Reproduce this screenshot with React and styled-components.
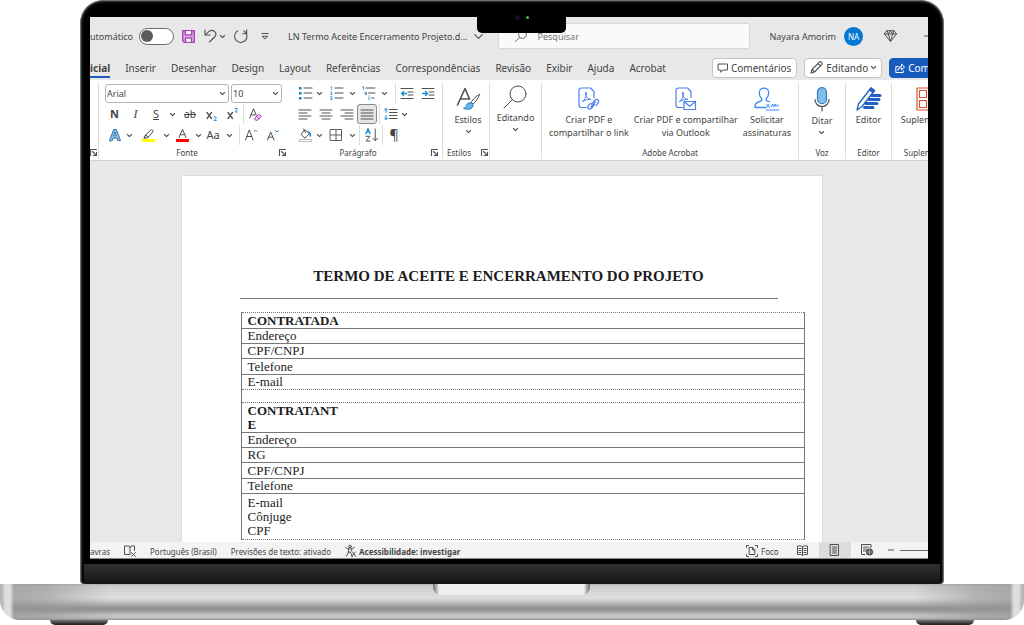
// App.jsx
import React from 'react';
import styled, { createGlobalStyle, css } from 'styled-components';

const GlobalStyle = createGlobalStyle`
  * {
    box-sizing: border-box;
  }

  body {
    margin: 0;
    background: #fff;
    color: #444;
    font-family: "Noto Sans", "Open Sans", sans-serif;
    font-size: 9px;
  }

  button, input, select {
    margin: 0;
    padding: 0;
    border: 0;
    background: none;
    color: inherit;
    font: inherit;
  }

  svg {
    display: block;
    flex: none;
    overflow: visible;
  }
`;

/* laptop */

const Laptop = styled.div`
  display: flex;
  flex-direction: column;
  height: 100vh;
  min-height: 400px;
  overflow: hidden;
`;

const Lid = styled.div`
  position: relative;
  flex: 1;
  min-height: 0;
  display: flex;
  flex-direction: column;
  margin: 0 80px;
  padding: 16px 15px 0 9px;
  border: 1px solid #6f7072;
  border-bottom: 0;
  border-radius: 23px 23px 4px 4px;
  background: #000;
  box-shadow: inset 0 0 2px 1px #3c3c3c;
`;

const Notch = styled.div`
  position: absolute;
  top: 8px;
  left: calc(50% - 35px);
  width: 89px;
  height: 24px;
  display: flex;
  justify-content: center;
  align-items: center;
  gap: 6px;
  padding-bottom: 8px;
  border-radius: 0 0 5px 5px;
  background: #000;
`;

const Dot = styled.span`
  width: ${({ $size }) => $size}px;
  height: ${({ $size }) => $size}px;
  border-radius: 50%;
  background: ${({ $color }) => $color};
`;

const Screen = styled.div`
  flex: 1;
  min-height: 0;
  display: flex;
  flex-direction: column;
  overflow: hidden;
  background: #e8e8e8;
`;

const Chin = styled.div`
  flex: none;
  height: 20px;
  margin: 5px -12px 0 -6px;
  border-radius: 0 0 4px 4px;
  background: linear-gradient(#303030, #161616);
`;

const Base = styled.div`
  flex: none;
  display: flex;
  justify-content: center;
  height: 36px;
  padding-right: 2px;
  border-radius: 0 0 20px 20px;
  background:
    linear-gradient(90deg, #b5b5b5 2px, #dedede 5px, #dedede 10px, rgba(150, 150, 150, 0.7) 14px,
      rgba(150, 150, 150, 0.6) 45px, transparent 110px, transparent calc(100% - 110px),
      rgba(150, 150, 150, 0.6) calc(100% - 45px), rgba(150, 150, 150, 0.7) calc(100% - 14px),
      #dedede calc(100% - 10px), #dedede calc(100% - 5px), #b5b5b5 calc(100% - 2px)),
    linear-gradient(#b0b0b0, #cdcdcd 2px, #dedede 14px, #c4c4c4 18px, #909090 24px, #999 27px, #c4c4c4 31px, #c0c0c0 34px, #8c8c8c);
`;

const Groove = styled.div`
  width: 157px;
  height: 11px;
  border-radius: 0 0 8px 8px;
  background: linear-gradient(90deg, #6c6c6c, #bbb 4px, #efefef 6px, #efefef calc(100% - 6px), #bbb calc(100% - 4px), #6c6c6c);
`;

const Feet = styled.div`
  flex: none;
  display: flex;
  justify-content: space-between;
  height: 5px;
  padding: 0 50px;
`;

const Foot = styled.div`
  width: 58px;
  border-radius: 0 0 6px 6px;
  background: linear-gradient(#777, #2b2b2b 4px);
`;

/* title bar */

const TitleBar = styled.header`
  flex: none;
  display: flex;
  align-items: center;
  height: 38px;
`;

const AutoSave = styled.label`
  display: flex;
  align-items: center;
  gap: 6px;
`;

const Toggle = styled.input`
  appearance: none;
  display: flex;
  align-items: center;
  width: 35px;
  height: 17px;
  padding-left: 1px;
  border: 1px solid #6a6a6a;
  border-radius: 9px;
  background: #fff;

  &::before {
    content: "";
    width: 12px;
    height: 12px;
    border-radius: 50%;
    background: #5c5c5c;
  }
`;

const QuickTools = styled.div`
  display: flex;
  align-items: center;
  gap: 9px;
  margin-left: 8px;
`;

const PlainButton = styled.button`
  display: flex;
  align-items: center;
  justify-content: center;
  gap: 3px;
`;

const FileName = styled(PlainButton)`
  gap: 6px;
  margin-left: 15px;
  white-space: nowrap;
`;

const Search = styled.label`
  flex: 1;
  display: flex;
  align-items: center;
  gap: 11px;
  height: 26px;
  margin: 0 19px 0 15px;
  padding-left: 16px;
  border: 1px solid #d6d6d6;
  border-radius: 3px;
  background: #fafafa;
`;

const SearchInput = styled.input`
  flex: 1;
  min-width: 0;
  outline: 0;

  &::placeholder {
    color: #757575;
    opacity: 1;
  }
`;

const Account = styled.div`
  display: flex;
  align-items: center;
  gap: 8px;
  white-space: nowrap;
`;

const Avatar = styled.span`
  width: 19px;
  height: 19px;
  border-radius: 50%;
  background: #0078d4;
  color: #fff;
  font-size: 8px;
  line-height: 19px;
  text-align: center;
`;

const WindowTools = styled.div`
  display: flex;
  align-items: center;
  gap: 27px;
  width: 65px;
  padding-left: 21px;
  overflow: hidden;
`;

/* tabs */

const TabBar = styled.nav`
  flex: none;
  display: flex;
  align-items: center;
  height: 25px;
  font-size: 10px;
  overflow: hidden;
`;

const Tab = styled.button`
  height: 20px;
  margin-right: 15px;
  padding-top: 2px;
  border-bottom: 2px solid ${({ $active }) => ($active ? '#185abd' : 'transparent')};
  font-weight: ${({ $active }) => ($active ? 700 : 400)};
  white-space: nowrap;
`;

const TabActions = styled.div`
  display: flex;
  gap: 7px;
  width: 216px;
  margin-left: auto;
`;

const ActionButton = styled(PlainButton)`
  flex: none;
  height: 20px;
  padding: 0 5px;
  border: 1px solid #c4c4c4;
  border-radius: 4px;
  background: #fff;
  white-space: nowrap;

  ${({ $primary }) => $primary && css`
    border-color: #185abd;
    background: #185abd;
    color: #fff;
  `}
`;

/* ribbon */

const Ribbon = styled.section`
  flex: none;
  display: flex;
  height: 81px;
  border-bottom: 1px solid #d2d2d2;
  background: #fff;
  overflow: hidden;
`;

const Group = styled.div`
  flex: none;
  display: flex;
  flex-direction: column;
  width: ${({ $width }) => $width}px;
  margin: 3px 0 1px;
  padding-left: ${({ $pad }) => $pad || 0}px;
  border-right: 1px solid ${({ $open }) => ($open ? 'transparent' : '#dcdcdc')};
`;

const GroupBody = styled.div`
  flex: 1;
  display: flex;
  flex-direction: ${({ $rows }) => ($rows ? 'column' : 'row')};
  justify-content: ${({ $rows }) => ($rows ? 'flex-start' : 'center')};
  gap: ${({ $rows }) => ($rows ? 1 : 5)}px;
`;

const GroupFooter = styled.div`
  display: flex;
  align-items: center;
  height: 13px;
  font-size: 8px;

  svg {
    margin-right: 4px;
  }
`;

const GroupLabel = styled.span`
  flex: 1;
  display: flex;
  justify-content: center;
  padding-right: ${({ $inset }) => ($inset ? 10 : 0)}px;
  white-space: nowrap;
`;

const ToolRow = styled.div`
  display: flex;
  align-items: center;
  height: 20px;
`;

const Tool = styled.button`
  display: flex;
  align-items: center;
  justify-content: center;
  flex: none;
  width: ${({ $width }) => $width}px;
  height: 20px;
  border: 1px solid ${({ $on }) => ($on ? '#8a8a8a' : 'transparent')};
  border-radius: 3px;
  background: ${({ $on }) => ($on ? '#e6e6e6' : 'none')};
  font-size: ${({ $size }) => $size || 11}px;
  line-height: 12px;
  white-space: nowrap;
`;

const Italic = styled.i`
  font-family: "Liberation Serif", serif;
  font-size: 12px;
`;

const Separator = styled.span`
  width: 1px;
  height: 20px;
  margin-left: ${({ $space }) => $space || 0}px;
  background: #dcdcdc;
`;

const SelectBox = styled.span`
  display: flex;
  align-items: center;
  width: ${({ $width }) => $width}px;
  height: 19px;
  margin-right: 2px;
  padding-right: 3px;
  border: 1px solid #b4b4b4;
  border-radius: 3px;

  select {
    appearance: none;
    flex: 1;
    min-width: 0;
    padding-left: 1px;
    outline: 0;
  }
`;

const BigTool = styled.button`
  display: flex;
  flex-direction: column;
  align-items: center;
  align-self: flex-start;
  padding-top: ${({ $top }) => $top || 4}px;
  line-height: 13px;
  white-space: nowrap;

  svg:first-child {
    margin-bottom: 2px;
  }

  svg + svg {
    margin-top: 3px;
  }
`;

/* document */

const Canvas = styled.main`
  flex: 1;
  min-height: 0;
  padding: 14px 15px 0 0;
  overflow: hidden;
`;

const Paper = styled.article`
  max-width: 642px;
  height: 100%;
  margin: 0 auto;
  padding: 92px 17px 0 58px;
  border: 1px solid #dcdcdc;
  border-bottom: 0;
  background: #fff;
  color: #1c1c1c;
  font-family: "Liberation Serif", serif;
  font-size: 13px;
  overflow: hidden;
`;

const Heading = styled.h1`
  margin: 0 27px 0 0;
  padding-bottom: 13px;
  border-bottom: 1px solid #777;
  font-size: 15px;
  line-height: 17px;
  text-align: center;
  white-space: nowrap;
`;

const FormTable = styled.table`
  width: calc(100% - 1px);
  margin: 13px 0 0 1px;
  border: 1px solid #777;
  border-top: 1px dotted #777;
  border-bottom: 1px dotted #777;
  border-collapse: collapse;
`;

const FormRow = styled.tr`
  height: ${({ $height }) => $height}px;
  border-bottom: 1px ${({ $dotted }) => ($dotted ? 'dotted' : 'solid')} #777;
`;

const FormCell = styled.td`
  padding: 0 6px;
  font-weight: ${({ $bold }) => ($bold ? 700 : 400)};
  line-height: 14px;
  vertical-align: middle;
`;

const Field = styled.div`
  max-width: 98px;
  word-break: break-all;
`;

/* status bar */

const StatusBar = styled.footer`
  flex: none;
  display: flex;
  align-items: center;
  height: 17px;
  border-bottom: 1px solid #8c8c8c;
  background: #f3f3f3;
  font-size: 8px;
  white-space: nowrap;
  overflow: hidden;
`;

const StatusItem = styled.button`
  display: flex;
  align-items: center;
  gap: 3px;
  margin-right: 14px;
  padding-top: 2px;
  font-weight: ${({ $bold }) => ($bold ? 700 : 400)};
`;

const ViewModes = styled.div`
  display: flex;
  align-items: center;
  width: 182px;
  margin-left: auto;

  ${StatusItem} {
    margin-right: 8px;
  }
`;

const ViewButton = styled.button`
  display: flex;
  align-items: center;
  justify-content: center;
  width: 32px;
  height: 16px;
  background: ${({ $on }) => ($on ? '#dcdcdc' : 'none')};
`;

const ZoomLine = styled.span`
  flex: 1;
  height: 1px;
  margin-left: 5px;
  background: #666;
`;

/* icons */

const Icon = ({ w = 12, h = w, box, children, stroke = '#505050', sw = 1 }) => (
  <svg
    width={w}
    height={h}
    viewBox={box || `0 0 ${w} ${h}`}
    fill="none"
    stroke={stroke}
    strokeWidth={sw}
    strokeLinecap="round"
    strokeLinejoin="round"
    aria-hidden="true"
  >
    {children}
  </svg>
);

const Chevron = ({ size = 5, sw = 1.3 }) => (
  <Icon w={size} box="0 0 6 6" sw={sw}><path d="M.5 1.8 3 4.3 5.5 1.8" /></Icon>
);

const Launcher = () => (
  <Icon w={7} sw={1.1}><path d="M.5 6.5v-6h6M2.5 2.5l4 4M6.5 3.2v3.3H3.2" /></Icon>
);

const SaveIcon = () => (
  <Icon w={13} stroke="#a33fb0" sw={1.3}>
    <path d="M.7.7h11.6v11.6H2.2L.7 10.8z" fill="#dfa9e6" />
    <path d="M3.3.9v4h6.4v-4M3.5 12V7.8h6V12" fill="#f3f0f4" />
  </Icon>
);

const UndoIcon = () => (
  <Icon w={13} h={14} sw={1.1}><path d="M1 1v5h5M1.3 5.7 4.8 2.6c4-3.2 9 1 6.2 4.9L5.5 13" /></Icon>
);

const RedoIcon = () => (
  <Icon w={14} sw={1.1}><path d="M8.700 4.800h4v-4M12.500 4.500 9.800 1.900M3.800 1.800a6.200 6.200 0 1 0 8.700 3" /></Icon>
);

const DiamondIcon = () => (
  <Icon w={13} h={12}><path d="M3.2.7h6.600L12.500 4 6.500 11.500.5 4zM.5 4h12M3.200.7 4.300 4l2.200 7.300L8.700 4 9.800.7M4.300 4l2.200-3.200L8.700 4" /></Icon>
);

const LensIcon = ({ size = 12, color = '#666' }) => (
  <Icon w={size} box="0 0 24 24" stroke={color} sw={24 / size}>
    <circle cx="15" cy="9" r="8" />
    <path d="M9.3 14.7 1 23" />
  </Icon>
);

const lineSets = {
  left: [[0, 12], [0, 8], [0, 12], [0, 8]],
  center: [[0, 12], [2, 10], [0, 12], [2, 10]],
  right: [[0, 12], [4, 12], [0, 12], [4, 12]],
  justify: [[0, 12], [0, 12], [0, 12], [0, 12]],
};

const AlignIcon = ({ kind }) => (
  <Icon w={12} h={11}>
    {lineSets[kind].map(([a, b], i) => <path key={i} d={`M${a} ${i * 3 + 1}H${b}`} />)}
  </Icon>
);

const BulletsIcon = () => (
  <Icon w={13} h={12}>
    <path d="M5 1h8M5 6h8M5 11h8" />
    <path d="M0 0h2.5v2.5H0zM0 5h2.5v2.5H0zM0 10h2.5v2.5H0z" stroke="none" fill="#1b7fc4" />
  </Icon>
);

const NumbersIcon = () => (
  <Icon w={13} h={12}>
    <path d="M5 1h8M5 6h8M5 11h8" />
    <path d="M.7 0 1.6-.5v3M.5 5h1.3v1.2L.5 7.500h1.500M.5 9.700h1.400v3H.5M.8 11.200h1" stroke="#2f8fd0" strokeWidth=".8" />
  </Icon>
);

const MultiIcon = () => (
  <Icon w={13} h={12}>
    <path d="M4 1h9M6.5 6H13M9.5 11H12" />
    <path d="M.7 0 1.6-.5v3M3 5.300h1.500v2.200H3.200V6.400h1.200M7 10v3M7 8.700v.1" stroke="#2f8fd0" strokeWidth=".9" />
  </Icon>
);

const IndentIcon = ({ out }) => (
  <Icon w={12} h={11}>
    <path d="M0 .5h12M7 4h5M7 7h5M0 10.5h12" />
    <path d={out ? 'M5.5 5.5H.5M2.5 3.5l-2 2 2 2' : 'M.5 5.5h5M3.5 3.5l2 2-2 2'} stroke="#1b8ad3" strokeWidth="1.3" />
  </Icon>
);

const SpacingIcon = () => (
  <Icon w={13} h={12}>
    <path d="M5.5 1.5H13M5.5 4.5H13M5.5 7.5H13M5.5 10.5H13" />
    <path d="M2 .5v4M.5 2 2 .3 3.5 2M2 7.5v4M.5 10 2 11.7 3.5 10" stroke="#1b8ad3" />
  </Icon>
);

const BucketIcon = () => (
  <Icon w={13} h={13}>
    <path d="M5.5 1 2 5.500l4 3.700 4.200-4.500zM4.500 0l2 3.500" />
    <path d="M9.500 3c1.500.5 2 2 1.800 4" stroke="#1b7fc4" strokeWidth="1.6" />
    <path d="M.5 10.500h12v2H.5z" stroke="#aaa" strokeWidth=".8" />
  </Icon>
);

const BordersIcon = () => (
  <Icon w={12} sw={0.9}><path d="M.5.5h11v11H.5zM6 .5v11M.5 6h11" /></Icon>
);

const SortIcon = () => (
  <Icon w={13} h={14}>
    <path d="M.8 6 3 .5 5.200 6M1.600 4.200h2.800" stroke="#1b8ad3" strokeWidth="1.2" />
    <path d="M1 8.300h4L1 13h4M10.200 1v11.500M7.800 10.200l2.400 2.500 2.400-2.500" />
  </Icon>
);

const EraserIcon = () => (
  <Icon w={13} h={13}>
    <path d="M.7 10 4.500.7l2.700 6.300M2 6.800h4.200" />
    <path d="m6 9.800 3.600-3.600 2.700 2-3.700 4H7zM7.500 8.200l2.600 2.300" stroke="#a33fb0" fill="#f1d9f4" />
  </Icon>
);

const OutlineAIcon = () => (
  <Icon w={12} stroke="#2e75b6">
    <path d="M.5 11.500 4.700.5h2.600l4.200 11H8.800L8 9H4L3.200 11.500zM4.800 6.800h2.400L6 3.200z" fill="#8fc1ea" />
  </Icon>
);

const HighlightIcon = () => (
  <Icon w={13} h={13}>
    <path d="M3.500 6.200 8.700 1c1-1 3 .5 2.200 1.800L6 8.500l-3.500.8zM4 6l2.200 2.200M2 9l1.500-2.500" />
    <path d="M0 11.500h13" stroke="#ff0" strokeWidth="3" strokeLinecap="butt" />
  </Icon>
);

const FontColorIcon = () => (
  <Icon w={13} h={13}>
    <path d="M3 8.500 6.500.3 10 8.500M4.200 5.700h4.600" />
    <path d="M0 11.500h13" stroke="#f00" strokeWidth="3" strokeLinecap="butt" />
  </Icon>
);

const SizeAIcon = ({ down }) => (
  <Icon w={12} h={12}>
    {down ? <path d="M.5 11 3.700 3 7 11M1.600 8.200h4.200" /> : <path d="M.5 11 4.300.8 8 11M1.800 7.500h5" />}
    <path d={down ? 'm8.500 1.500 1.500 1.500 1.500-1.500' : 'M9 2.500 10.500 1 12 2.500'} stroke="#1b8ad3" />
  </Icon>
);

const ScriptIcon = ({ raised }) => (
  <Icon w={12} h={11}>
    <path d="m1 3.500 4.500 6M5.500 3.500l-4.500 6" strokeWidth="1.3" />
    <path
      d={raised ? 'M8-.5h2V1L8 3h2.300' : 'M8 8h2v1.500l-2 2h2.300'}
      stroke="#1b8ad3"
      strokeWidth=".9"
    />
  </Icon>
);

const StylesIcon = () => (
  <Icon w={25} h={24} sw={1.6}>
    <path d="M1.500 18 9 1.500 13.500 12M4.500 12h8" />
    <path d="M23.500 7.500c-3 1-6.500 4.500-8.500 8l2 1.500c3-2.500 5.500-6 6.500-9.500z" strokeWidth="1" />
    <path d="M14.800 16c-3-.8-4.300 1.500-4.800 3.500-.5 1.300-1.700 1.500-2.500 1.700 3.500 2 10 1.500 9.500-3.400z" fill="#6db4ea" stroke="#1b7fc4" strokeWidth="1" />
  </Icon>
);

const PdfIcon = ({ mail }) => (
  <Icon w={21} h={24} stroke="#4b7ff0" sw={1.2}>
    <path d="M8 20.500H3.500c-1.500 0-2.500-1-2.500-2.500V3.500C1 2 2 1 3.500 1h9l3.500 3.500v6" />
    <path d="M4.500 14.500c2.500-1.500 4-5 4-8.500 0-1-1.300-1-1.200.2.200 3 2.500 6 5.700 6.300-3-.2-6 .5-8.500 2z" strokeWidth="1" />
    {mail ? (
      <path d="M9 14.500h11.500v8H9zM9 14.500l5.700 4.700 5.800-4.700" />
    ) : (
      <path d="m13.500 17 3.600-3.800c2-2 4.800.5 3 2.800l-2.200 2.300M16.500 17.500l-3 3.800c-2 2-5-.5-3.200-2.800l2-2.200M13 20l4.500-5" />
    )}
  </Icon>
);

const SignIcon = () => (
  <Icon w={26} h={24} stroke="#3c8df5" sw={1.3}>
    <path d="M12 20.500H1c-.5-4 1.500-5.500 6-6.500 1-.3 1.200-1.700.3-2.700C5.500 9 5 6.500 5.500 4.500c1-4.500 8-4.500 9 0 .5 2.500-.3 5-2 7-.8 1-.5 2.200.5 2.500l2.500.7" />
    <path d="m12.500 17 3 3.500M15.500 17l-3 3.500M17 20l1.700-3 .8 3 1.700-3 .8 2.500 1.500-2 .8 1.500M12 23h13" strokeWidth="1" />
  </Icon>
);

const MicIcon = () => (
  <Icon w={16} h={25} sw={1.2}>
    <rect x="3.5" y=".7" width="9" height="16" rx="4.5" fill="#83bdea" stroke="#2b7fc5" />
    <path d="M1 12.500c0 4 3 7 7 7s7-3 7-7M8 19.500V24" />
  </Icon>
);

const EditorIcon = () => (
  <Icon w={25} h={24} stroke="#1f5fc4" sw={1.3}>
    <path d="M16 8.500h8M13 12.500h10M10 16.500H21M8.500 20.500H17" strokeWidth="3" />
    <path d="M15 1 18.500 3.500 6 19.500 1 23l1.500-6z" fill="#fff" />
    <path d="M15 1 18.500 3.500 17 5.500l-3.500-2.600z" fill="#1f5fc4" />
  </Icon>
);

const AddinsIcon = () => (
  <Icon w={26} h={24} stroke="#d9532c" sw={1.2}>
    <path d="M1 1h23v22H1zM3.500 3.500h7v7h-7zM3.500 13.500h7v7h-7zM14.500 3.500h7v7h-7zM14.500 13.500h7v7h-7z" />
  </Icon>
);

const CommentIcon = () => (
  <Icon w={10}><path d="M.5 1h9v6H5L2.800 9.300V7H.5z" /></Icon>
);

const PencilIcon = () => (
  <Icon w={13} sw={1.1}><path d="M1 12 2 8.500 9.300 1.200c1.500-1.400 3.800.8 2.500 2.400L4.500 11zM8 2.600 10.500 5M2 8.500l2.500 2.500" /></Icon>
);

const ShareIcon = () => (
  <Icon w={10} stroke="#fff">
    <path d="M3 3.500H.8v6h7.400V7.500M3 7c.3-2.500 1.500-3.500 3.500-3.500V1.200L9.600 4 6.500 6.700V5C5 5 4 5.500 3 7z" />
  </Icon>
);

const ProofIcon = () => (
  <Icon w={12} h={12}><path d="M6 9.500H.5V1H4c1.500 0 2 .5 2 1.500 0-1 .5-1.500 2-1.500h2.500v4.500M6 2.500v7M7.500 7.500l4 4M11.500 7.500l-4 4" /></Icon>
);

const AccessIcon = () => (
  <Icon w={11} h={12}>
    <circle cx="5" cy="1.5" r="1.3" />
    <path d="M.7 2.500c3 2 5.700 2 8.700 0M3.500 4v3L1.500 11M6.700 4v2M3.500 7.500 5 7M5.500 7.500l2 4M10.500 7l-4 4.500M7.500 7l3.300 4.500" />
  </Icon>
);

const FocusIcon = () => (
  <Icon w={12} h={12}>
    <path d="M.5 2.500v-2h2M9.500.5h2v2M.5 9.500v2h2M9.500 11.500h2v-2M3.500 2.500h3l2.300 2.300v4.700H3.500zM6.500 2.500v2.500h2.300" />
  </Icon>
);

const BookIcon = () => (
  <Icon w={11}><path d="M5.500 1.500C4.500.8 2 .8.500 1v8.500c2-.2 4 0 5 .8 1-.8 3-1 5-.8V1c-1.500-.2-4-.2-5 .5zM5.500 1.500v8.500M2 3.500h2M2 5.500h2M2 7.500h2M7 3.500h2M7 5.500h2M7 7.500h2" /></Icon>
);

const PageIcon = () => (
  <Icon w={9} h={12}><path d="M.5.5h8v11h-8zM2.500 3h4M2.500 5h4M2.500 7h4M2.500 9h4" /></Icon>
);

const WebIcon = () => (
  <Icon w={12} h={12}>
    <path d="M4 10.500H.5V.5h9.500v3M2.500 3h5.500M2.500 5h3M2.500 7h2" />
    <circle cx="8.5" cy="8" r="3.2" fill="#505050" />
    <path d="M8.500 5.500v5M6 8h5" stroke="#ddd" strokeWidth=".6" />
  </Icon>
);

/* page */

const tabs = [
  'icial', 'Inserir', 'Desenhar', 'Design', 'Layout', 'Referências',
  'Correspondências', 'Revisão', 'Exibir', 'Ajuda', 'Acrobat',
];

const rows = [
  { fields: ['CONTRATADA'], bold: true, height: 16 },
  { fields: ['Endereço'], height: 15 },
  { fields: ['CPF/CNPJ'], height: 15 },
  { fields: ['Telefone'], height: 16 },
  { fields: ['E-mail'], height: 15, dotted: true },
  { fields: [], height: 13, dotted: true },
  { fields: ['CONTRATANTE'], bold: true, height: 30 },
  { fields: ['Endereço'], height: 15 },
  { fields: ['RG'], height: 15 },
  { fields: ['CPF/CNPJ'], height: 16 },
  { fields: ['Telefone'], height: 15 },
  { fields: ['E-mail', 'Cônjuge', 'CPF'], height: 46, dotted: true },
];

const ChevronTool = ({ width = 12 }) => (
  <Tool $width={width} aria-label="Mais opções"><Chevron /></Tool>
);

const FontGroup = () => (
  <Group $width={192} $pad={6} $open>
    <GroupBody $rows>
      <ToolRow>
        <SelectBox $width={124}>
          <select aria-label="Fonte" defaultValue="Arial"><option>Arial</option></select>
          <Chevron />
        </SelectBox>
        <SelectBox $width={51}>
          <select aria-label="Tamanho" defaultValue="10"><option>10</option></select>
          <Chevron />
        </SelectBox>
      </ToolRow>
      <ToolRow>
        <Tool $width={19}><b>N</b></Tool>
        <Tool $width={23}><Italic>I</Italic></Tool>
        <Tool $width={18}><u>S</u></Tool>
        <ChevronTool width={14} />
        <Tool $width={22} $size={10}><s>ab</s></Tool>
        <Tool $width={21} aria-label="Subscrito"><ScriptIcon /></Tool>
        <Tool $width={21} aria-label="Sobrescrito"><ScriptIcon raised /></Tool>
        <Separator />
        <Tool $width={23} aria-label="Limpar formatação"><EraserIcon /></Tool>
      </ToolRow>
      <ToolRow>
        <Tool $width={20} aria-label="Efeitos de texto"><OutlineAIcon /></Tool>
        <ChevronTool width={8} />
        <Tool $width={30} aria-label="Realce"><HighlightIcon /></Tool>
        <ChevronTool width={6} />
        <Tool $width={26} aria-label="Cor da fonte"><FontColorIcon /></Tool>
        <ChevronTool width={6} />
        <Tool $width={24}>Aa</Tool>
        <ChevronTool width={8} />
        <Separator $space={6} />
        <Tool $width={22} aria-label="Aumentar fonte"><SizeAIcon /></Tool>
        <Tool $width={22} aria-label="Diminuir fonte"><SizeAIcon down /></Tool>
      </ToolRow>
    </GroupBody>
    <GroupFooter><GroupLabel $inset>Fonte</GroupLabel><Launcher /></GroupFooter>
  </Group>
);

const ParagraphGroup = () => (
  <Group $width={152} $pad={4}>
    <GroupBody $rows>
      <ToolRow>
        <Tool $width={20} aria-label="Marcadores"><BulletsIcon /></Tool>
        <ChevronTool width={8} />
        <Tool $width={26} aria-label="Numeração"><NumbersIcon /></Tool>
        <ChevronTool width={6} />
        <Tool $width={26} aria-label="Vários níveis"><MultiIcon /></Tool>
        <ChevronTool width={6} />
        <Separator $space={8} />
        <Tool $width={22} aria-label="Diminuir recuo"><IndentIcon out /></Tool>
        <Tool $width={20} aria-label="Aumentar recuo"><IndentIcon /></Tool>
      </ToolRow>
      <ToolRow>
        <Tool $width={20} aria-label="Esquerda"><AlignIcon kind="left" /></Tool>
        <Tool $width={22} aria-label="Centro"><AlignIcon kind="center" /></Tool>
        <Tool $width={20} aria-label="Direita"><AlignIcon kind="right" /></Tool>
        <Tool $width={20} $on aria-label="Justificar"><AlignIcon kind="justify" /></Tool>
        <Separator $space={2} />
        <Tool $width={20} aria-label="Espaçamento"><SpacingIcon /></Tool>
        <ChevronTool width={8} />
      </ToolRow>
      <ToolRow>
        <Tool $width={20} aria-label="Sombreamento"><BucketIcon /></Tool>
        <ChevronTool width={8} />
        <Tool $width={26} aria-label="Bordas"><BordersIcon /></Tool>
        <ChevronTool width={6} />
        <Separator $space={4} />
        <Tool $width={22} aria-label="Classificar"><SortIcon /></Tool>
        <Separator />
        <Tool $width={22} $size={14}>¶</Tool>
      </ToolRow>
    </GroupBody>
    <GroupFooter><GroupLabel $inset>Parágrafo</GroupLabel><Launcher /></GroupFooter>
  </Group>
);

const App = () => (
  <Laptop>
    <GlobalStyle />
    <Lid>
      <Screen>
        <TitleBar>
          <AutoSave>
            utomático
            <Toggle type="checkbox" role="switch" />
          </AutoSave>
          <QuickTools>
            <PlainButton aria-label="Salvar"><SaveIcon /></PlainButton>
            <PlainButton aria-label="Desfazer"><UndoIcon /><Chevron /></PlainButton>
            <PlainButton aria-label="Refazer"><RedoIcon /></PlainButton>
            <PlainButton aria-label="Personalizar">
              <Icon w={16} h={7}><path d="M5 .5h6M5.5 3.5 8 6l2.5-2.5z" /></Icon>
            </PlainButton>
          </QuickTools>
          <FileName>
            LN Termo Aceite Encerramento Projeto.d...
            <Chevron size={9} sw={0.8} />
          </FileName>
          <Search>
            <LensIcon />
            <SearchInput type="search" placeholder="Pesquisar" aria-label="Pesquisar" />
          </Search>
          <Account>
            Nayara Amorim
            <Avatar>NA</Avatar>
          </Account>
          <WindowTools>
            <DiamondIcon />
            <Icon w={10} h={2}><path d="M.5 1h9" /></Icon>
          </WindowTools>
        </TitleBar>

        <TabBar>
          {tabs.map((tab, i) => <Tab key={tab} $active={i === 0}>{tab}</Tab>)}
          <TabActions>
            <ActionButton><CommentIcon />Comentários</ActionButton>
            <ActionButton><PencilIcon />Editando<Chevron /></ActionButton>
            <ActionButton $primary><ShareIcon />Compartilhar</ActionButton>
          </TabActions>
        </TabBar>

        <Ribbon>
          <Group $width={9}>
            <GroupBody />
            <GroupFooter><Launcher /></GroupFooter>
          </Group>
          <FontGroup />
          <ParagraphGroup />
          <Group $width={47} $pad={4}>
            <GroupBody>
              <BigTool><StylesIcon />Estilos<Chevron /></BigTool>
            </GroupBody>
            <GroupFooter><GroupLabel $inset>Estilos</GroupLabel><Launcher /></GroupFooter>
          </Group>
          <Group $width={52}>
            <GroupBody>
              <BigTool $top={2}><LensIcon size={24} color="#505050" />Editando<Chevron /></BigTool>
            </GroupBody>
            <GroupFooter />
          </Group>
          <Group $width={257}>
            <GroupBody>
              <BigTool><PdfIcon />Criar PDF e<br />compartilhar o link</BigTool>
              <BigTool><PdfIcon mail />Criar PDF e compartilhar<br />via Outlook</BigTool>
              <BigTool><SignIcon />Solicitar<br />assinaturas</BigTool>
            </GroupBody>
            <GroupFooter><GroupLabel>Adobe Acrobat</GroupLabel></GroupFooter>
          </Group>
          <Group $width={47}>
            <GroupBody>
              <BigTool><MicIcon />Ditar<Chevron /></BigTool>
            </GroupBody>
            <GroupFooter><GroupLabel>Voz</GroupLabel></GroupFooter>
          </Group>
          <Group $width={46}>
            <GroupBody>
              <BigTool><EditorIcon />Editor</BigTool>
            </GroupBody>
            <GroupFooter><GroupLabel>Editor</GroupLabel></GroupFooter>
          </Group>
          <Group $width={74}>
            <GroupBody>
              <BigTool><AddinsIcon />Suplementos</BigTool>
            </GroupBody>
            <GroupFooter><GroupLabel>Suplementos</GroupLabel></GroupFooter>
          </Group>
        </Ribbon>

        <Canvas>
          <Paper>
            <Heading>TERMO DE ACEITE E ENCERRAMENTO DO PROJETO</Heading>
            <FormTable>
              <tbody>
                {rows.map((row, i) => (
                  <FormRow key={i} $height={row.height} $dotted={row.dotted}>
                    <FormCell $bold={row.bold}>
                      {row.fields.map(field => <Field key={field}>{field}</Field>)}
                    </FormCell>
                  </FormRow>
                ))}
              </tbody>
            </FormTable>
          </Paper>
        </Canvas>

        <StatusBar>
          <StatusItem>avras</StatusItem>
          <StatusItem aria-label="Revisão de texto"><ProofIcon /></StatusItem>
          <StatusItem>Português (Brasil)</StatusItem>
          <StatusItem>Previsões de texto: ativado</StatusItem>
          <StatusItem $bold><AccessIcon />Acessibilidade: investigar</StatusItem>
          <ViewModes>
            <StatusItem><FocusIcon />Foco</StatusItem>
            <ViewButton aria-label="Leitura"><BookIcon /></ViewButton>
            <ViewButton $on aria-label="Layout de impressão"><PageIcon /></ViewButton>
            <ViewButton aria-label="Layout da Web"><WebIcon /></ViewButton>
            <Icon w={12} h={2}><path d="M5.5 1h5" /></Icon>
            <ZoomLine />
          </ViewModes>
        </StatusBar>
      </Screen>
      <Chin />
      <Notch>
        <Dot $size={5} $color="#10141f" />
        <Dot $size={3} $color="#3fc43a" />
      </Notch>
    </Lid>
    <Base><Groove /></Base>
    <Feet><Foot /><Foot /></Feet>
  </Laptop>
);

export default App;
